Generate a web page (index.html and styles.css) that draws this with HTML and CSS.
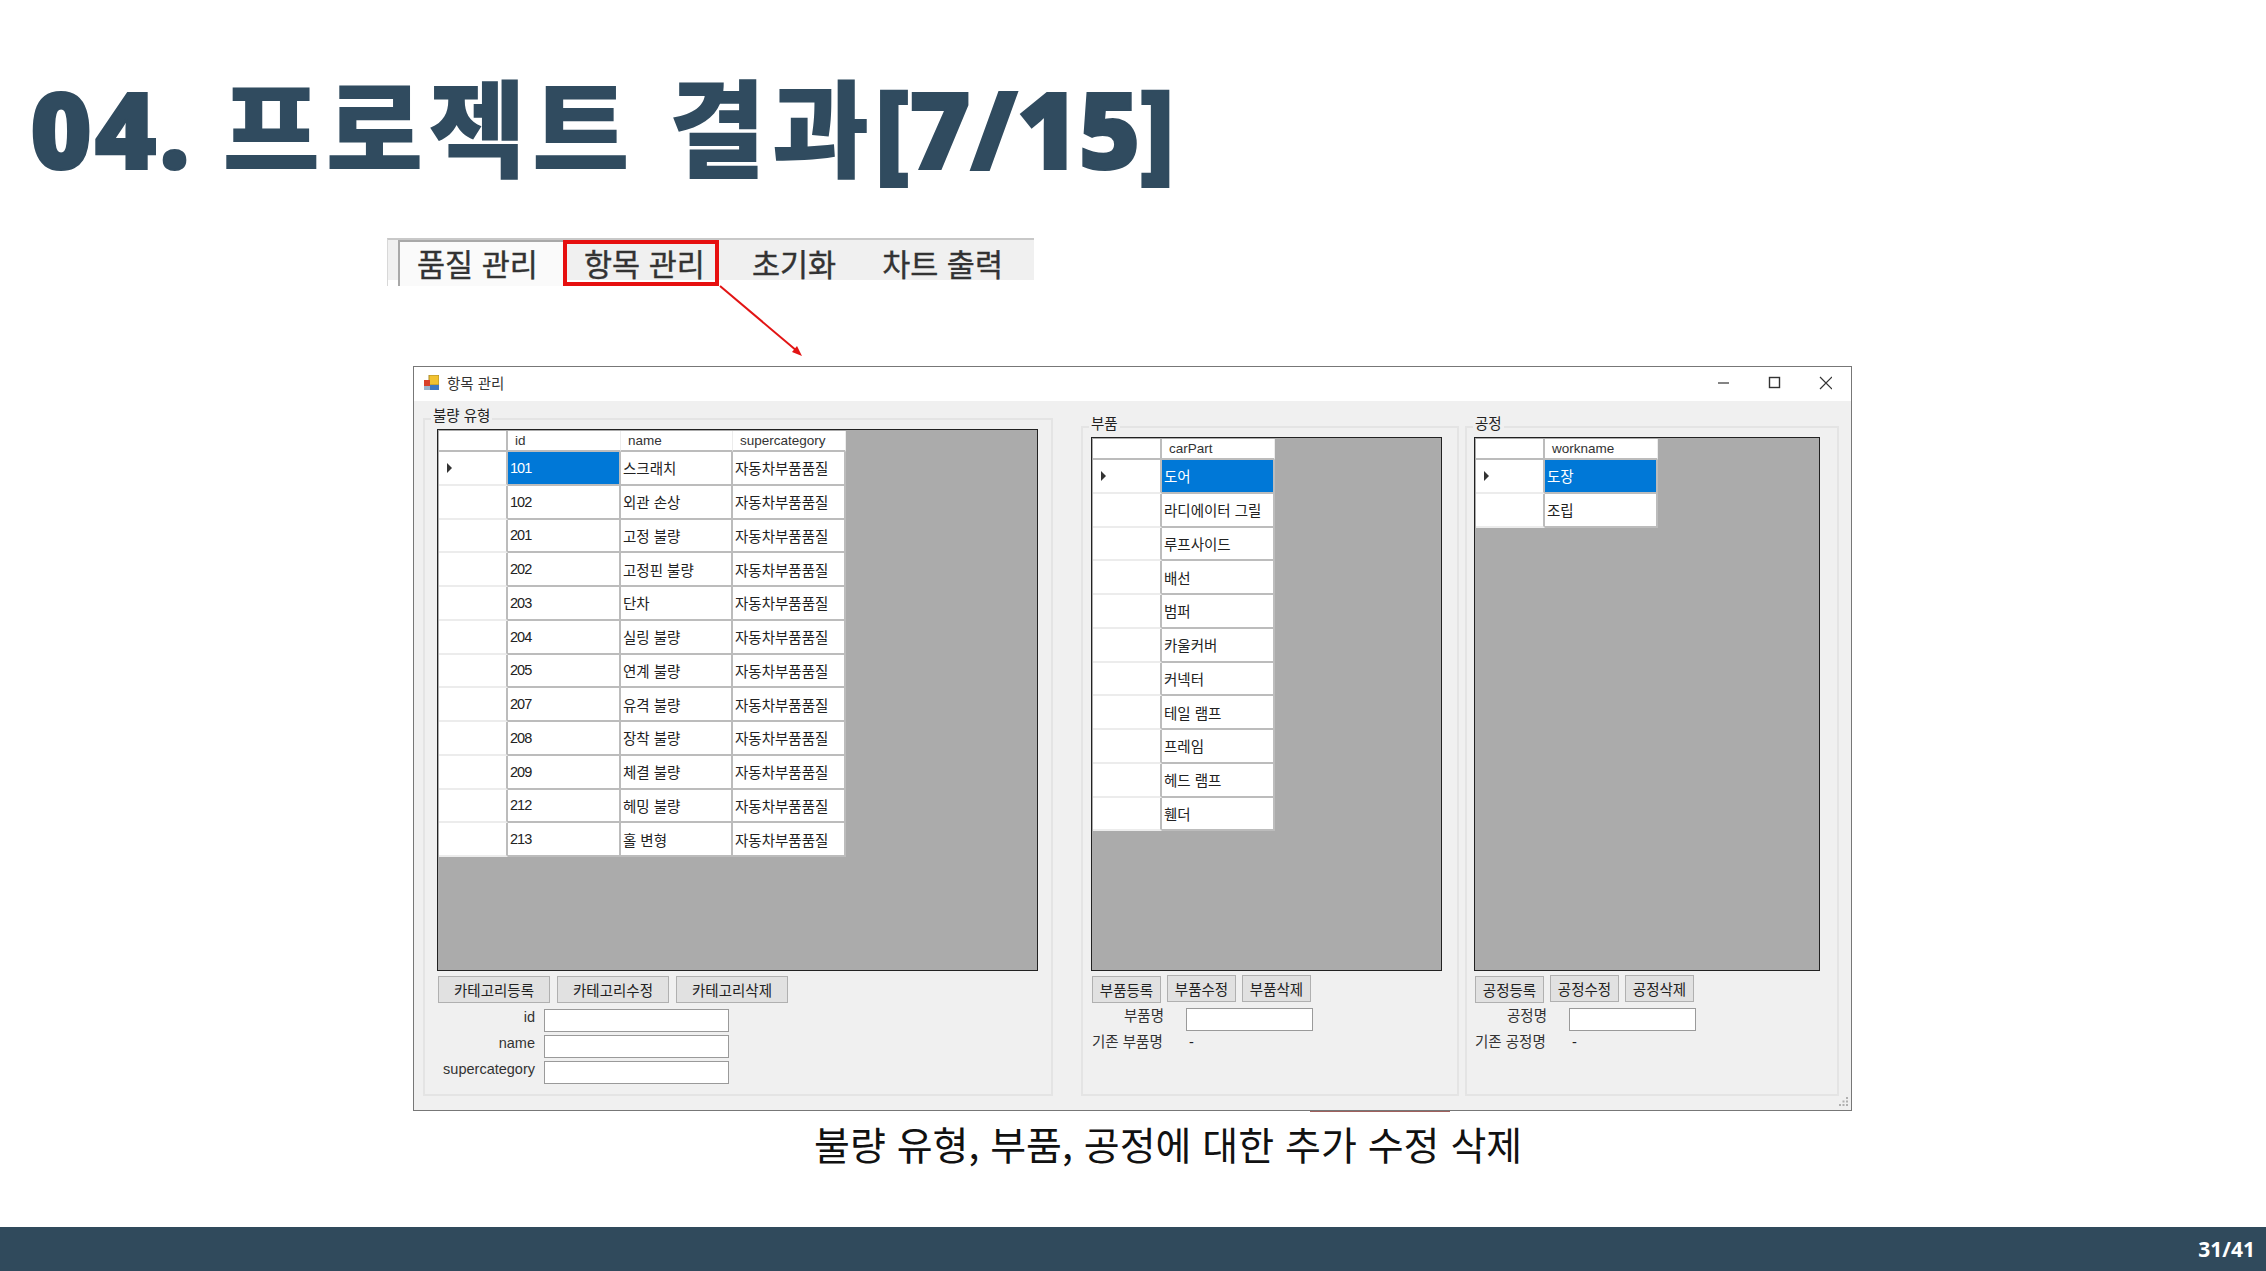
FILE: index.html
```html
<!DOCTYPE html>
<html lang="ko">
<head>
  <meta charset="UTF-8" />
  <title>04. 프로젝트 결과[7/15]</title>
  <link rel="stylesheet" href="styles.css">
</head>
<body>
<div class="slide">

  <h1 class="title"><span class="title-latin title-number">04. </span><span class="title-kr">프로젝트 결과</span><span class="title-latin">[7/15]</span></h1>

  <div class="tabs">
    <div class="tab tab-first">품질 관리</div>
    <div class="tab tab-marked">항목 관리</div>
    <div class="tab tab-third">초기화</div>
    <div class="tab tab-fourth">차트 출력</div>
    <svg class="arrow" width="90" height="76" viewBox="0 0 90 76">
      <line x1="1" y1="1" x2="78" y2="66" stroke="#e21414" stroke-width="2" />
      <polygon points="83,71 73,67 78,61" fill="#e21414" />
    </svg>
  </div>

  <div class="window">
    <div class="titlebar">
      <svg class="app-icon" width="15" height="15" viewBox="0 0 15 15">
        <rect x="5" y="0" width="10" height="10" fill="#f2c230" stroke="#a98a2a" stroke-width="1" />
        <rect x="0" y="5" width="6" height="6" fill="#d8402a" />
        <rect x="0" y="11" width="6" height="4" fill="#9db4cc" />
        <rect x="6" y="10" width="9" height="5" fill="#3f78c0" />
      </svg>
      <span class="window-title">항목 관리</span>
      <div class="window-controls">
        <svg width="114" height="14" viewBox="0 0 114 14">
          <line x1="0" y1="7" x2="11" y2="7" stroke="#333" stroke-width="1.2" />
          <rect x="51.5" y="1.5" width="10" height="10" fill="none" stroke="#333" stroke-width="1.4" />
          <path d="M102 1 L114 13 M114 1 L102 13" stroke="#333" stroke-width="1.2" fill="none" />
        </svg>
      </div>
    </div>

    <div class="window-body">

      <div class="group group-defect">
        <span class="legend">불량 유형</span>
        <div class="grid-box">
          <div class="data-grid cols-defect">
            <div class="corner"></div><div class="head">id</div><div class="head">name</div><div class="head">supercategory</div>
            <div class="rowhead"><i class="caret"></i></div><div class="cell num selected">101</div><div class="cell">스크래치</div><div class="cell">자동차부품품질</div>
            <div class="rowhead"></div><div class="cell num">102</div><div class="cell">외관 손상</div><div class="cell">자동차부품품질</div>
            <div class="rowhead"></div><div class="cell num">201</div><div class="cell">고정 불량</div><div class="cell">자동차부품품질</div>
            <div class="rowhead"></div><div class="cell num">202</div><div class="cell">고정핀 불량</div><div class="cell">자동차부품품질</div>
            <div class="rowhead"></div><div class="cell num">203</div><div class="cell">단차</div><div class="cell">자동차부품품질</div>
            <div class="rowhead"></div><div class="cell num">204</div><div class="cell">실링 불량</div><div class="cell">자동차부품품질</div>
            <div class="rowhead"></div><div class="cell num">205</div><div class="cell">연계 불량</div><div class="cell">자동차부품품질</div>
            <div class="rowhead"></div><div class="cell num">207</div><div class="cell">유격 불량</div><div class="cell">자동차부품품질</div>
            <div class="rowhead"></div><div class="cell num">208</div><div class="cell">장착 불량</div><div class="cell">자동차부품품질</div>
            <div class="rowhead"></div><div class="cell num">209</div><div class="cell">체결 불량</div><div class="cell">자동차부품품질</div>
            <div class="rowhead"></div><div class="cell num">212</div><div class="cell">헤밍 불량</div><div class="cell">자동차부품품질</div>
            <div class="rowhead"></div><div class="cell num">213</div><div class="cell">홀 변형</div><div class="cell">자동차부품품질</div>
          </div>
        </div>
        <div class="group-foot">
          <div class="buttons buttons-wide">
            <button class="btn">카테고리등록</button>
            <button class="btn">카테고리수정</button>
            <button class="btn">카테고리삭제</button>
          </div>
          <div class="form form-defect">
            <label class="label">id</label><div class="input"></div>
            <label class="label">name</label><div class="input"></div>
            <label class="label">supercategory</label><div class="input"></div>
          </div>
        </div>
      </div>

      <div class="group group-part">
        <span class="legend">부품</span>
        <div class="grid-box">
          <div class="data-grid cols-single">
            <div class="corner"></div><div class="head">carPart</div>
            <div class="rowhead"><i class="caret"></i></div><div class="cell selected">도어</div>
            <div class="rowhead"></div><div class="cell">라디에이터 그릴</div>
            <div class="rowhead"></div><div class="cell">루프사이드</div>
            <div class="rowhead"></div><div class="cell">배선</div>
            <div class="rowhead"></div><div class="cell">범퍼</div>
            <div class="rowhead"></div><div class="cell">카울커버</div>
            <div class="rowhead"></div><div class="cell">커넥터</div>
            <div class="rowhead"></div><div class="cell">테일 램프</div>
            <div class="rowhead"></div><div class="cell">프레임</div>
            <div class="rowhead"></div><div class="cell">헤드 램프</div>
            <div class="rowhead"></div><div class="cell">휀더</div>
          </div>
        </div>
        <div class="group-foot">
          <div class="buttons">
            <button class="btn btn-low">부품등록</button>
            <button class="btn">부품수정</button>
            <button class="btn">부품삭제</button>
          </div>
          <div class="form form-small">
            <label class="label">부품명</label><div class="input"></div>
            <label class="label label-left">기존 부품명</label><span class="value">-</span>
          </div>
        </div>
      </div>

      <div class="group group-work">
        <span class="legend">공정</span>
        <div class="grid-box">
          <div class="data-grid cols-single">
            <div class="corner"></div><div class="head">workname</div>
            <div class="rowhead"><i class="caret"></i></div><div class="cell selected">도장</div>
            <div class="rowhead"></div><div class="cell">조립</div>
          </div>
        </div>
        <div class="group-foot">
          <div class="buttons">
            <button class="btn btn-low">공정등록</button>
            <button class="btn">공정수정</button>
            <button class="btn">공정삭제</button>
          </div>
          <div class="form form-small">
            <label class="label">공정명</label><div class="input"></div>
            <label class="label label-left">기존 공정명</label><span class="value">-</span>
          </div>
        </div>
      </div>

    </div>

    <svg class="grip" width="10" height="10" viewBox="0 0 10 10">
      <rect x="7" y="0" width="2" height="2" fill="#b0b0b0" />
      <rect x="3.5" y="3.5" width="2" height="2" fill="#b0b0b0" />
      <rect x="7" y="3.5" width="2" height="2" fill="#b0b0b0" />
      <rect x="0" y="7" width="2" height="2" fill="#b0b0b0" />
      <rect x="3.5" y="7" width="2" height="2" fill="#b0b0b0" />
      <rect x="7" y="7" width="2" height="2" fill="#b0b0b0" />
    </svg>
    <div class="sliver"></div>
  </div>

  <p class="caption">불량 유형, 부품, 공정에 대한 추가 수정 삭제</p>

  <div class="footer">
    <span class="page-no">31/41</span>
  </div>

</div>
</body>
</html>
```

FILE: styles.css
```css
* {
  box-sizing: border-box;
}
html, body {
  margin: 0;
  padding: 0;
  background: #fff;
}
body {
  font-family: "Liberation Sans", "Noto Sans CJK KR", sans-serif;
  font-size: 14.5px;
  color: #222;
}
.slide {
  display: flex;
  flex-direction: column;
  height: 1271px;
  overflow: hidden;
}

/* title */
.title {
  height: 238px;
  margin: 0;
  padding: 56px 0 0 30px;
  font-family: "Open Sans", "Noto Sans CJK KR", sans-serif;
  font-size: 106px;
  font-weight: 800;
  line-height: 144px;
  white-space: nowrap;
  color: #304b5f;
}
.title-latin {
  letter-spacing: -0.5px;
  -webkit-text-stroke: 2px #304b5f;
}
.title-number {
  letter-spacing: 2.5px;
}
.title-kr {
  letter-spacing: 5.7px;
}

/* tab strip */
.tabs {
  position: relative;
  display: flex;
  flex: none;
  width: 647px;
  height: 48px;
  margin-left: 387px;
  border-top: 2px solid #c8c8c8;
  border-left: 1px solid #d8d8d8;
  background: linear-gradient(#f0f0f0 40px, #fff 40px);
  font-family: "Noto Sans CJK KR", sans-serif;
  font-size: 30.5px;
  color: #333;
  -webkit-text-stroke: 0.4px #333;
}
.tab {
  flex: none;
  line-height: 46px;
  white-space: nowrap;
}
.tab-first {
  width: 165px;
  height: 46px;
  margin-left: 10px;
  padding-left: 17px;
  background: #fafafa;
  border-left: 2px solid #a8a8a8;
  border-top: 2px solid #a8a8a8;
  line-height: 42px;
}
.tab-marked {
  width: 156px;
  height: 46px;
  padding-left: 17px;
  border: 4px solid #e60f0f;
  line-height: 38px;
}
.tab-third {
  margin-left: 33px;
}
.tab-fourth {
  margin-left: 46px;
}
.arrow {
  position: absolute;
  left: 331px;
  top: 45px;
}

/* window */
.window {
  position: relative;
  display: flex;
  flex-direction: column;
  flex: none;
  width: 1439px;
  height: 745px;
  margin: 80px 0 0 413px;
  border: 1px solid #777;
  background: #f0f0f0;
}
.titlebar {
  display: flex;
  align-items: center;
  flex: none;
  height: 34px;
  padding: 0 0 3px 10px;
  background: #fff;
}
.window-title {
  margin-left: 8px;
  font-size: 14.5px;
  color: #333;
}
.window-controls {
  display: flex;
  margin-left: auto;
  padding-right: 19px;
}
.window-body {
  display: flex;
  align-items: stretch;
  flex: 1;
  min-height: 0;
  padding: 0 0 14px 9px;
}
.grip {
  position: absolute;
  right: 2px;
  bottom: 3px;
}
.sliver {
  position: absolute;
  left: 896px;
  bottom: -2px;
  width: 140px;
  height: 1px;
  background: #a0605c;
}

/* group boxes */
.group {
  position: relative;
  display: flex;
  flex-direction: column;
  flex: none;
  border: 2px solid #e4e4e4;
}
.group-defect {
  width: 630px;
  margin-top: 17px;
  padding: 9px 13px 0 12px;
}
.group-part {
  width: 378px;
  margin: 25px 0 0 28px;
  padding: 9px 15px 0 8px;
}
.group-work {
  width: 374px;
  margin: 25px 0 0 6px;
  padding: 9px 17px 0 7px;
}
.legend {
  position: absolute;
  top: -14px;
  left: 6px;
  padding: 0 2px;
  background: #f0f0f0;
  line-height: 20px;
}
.grid-box {
  flex: 1;
  min-height: 0;
  border: 1px solid #222;
  background: #ababab;
  padding: 1px;
}

/* data grid */
.data-grid {
  display: grid;
  grid-auto-rows: 33.75px;
  grid-template-rows: 21px;
  width: max-content;
}
.cols-defect {
  grid-template-columns: 69px 113px 112px 113px;
}
.cols-single {
  grid-template-columns: 69px 113px;
}
.corner, .rowhead {
  background: #fff;
  border-right: 2px solid #bcbcbc;
  border-bottom: 2px solid #ececec;
}
.corner {
  border-bottom-color: #bcbcbc;
}
.head, .cell {
  display: flex;
  align-items: center;
  background: #fff;
  white-space: nowrap;
}
.head {
  padding-left: 7px;
  border-right: 1px solid #ececec;
  border-bottom: 2px solid #bcbcbc;
  font-size: 13.5px;
  color: #333;
}
.cell {
  padding-left: 2px;
  border-right: 2px solid #bcbcbc;
  border-bottom: 2px solid #bcbcbc;
}
.num {
  letter-spacing: -1px;
}
.selected {
  background: #0078d7;
  color: #fff;
}
.rowhead {
  display: flex;
  align-items: center;
  padding-left: 8px;
}
.caret {
  width: 0;
  height: 0;
  border-left: 5px solid #333;
  border-top: 5px solid transparent;
  border-bottom: 5px solid transparent;
}

/* buttons and form under each grid */
.group-foot {
  flex: none;
  height: 123px;
}
.buttons {
  display: flex;
  align-items: flex-start;
  gap: 6px;
  margin: 4px 0 0 1px;
}
.buttons-wide {
  gap: 7px;
  margin-top: 5px;
}
.btn {
  width: 69px;
  height: 27px;
  padding: 0;
  border: 1px solid #b0b0b0;
  background: #e1e1e1;
  font: inherit;
  color: #222;
  white-space: nowrap;
}
.buttons-wide .btn {
  width: 112px;
}
.btn-low {
  margin-top: 1px;
}
.form {
  display: grid;
  row-gap: 3px;
  margin-left: 1px;
}
.form-defect {
  grid-template-columns: 97px 185px;
  column-gap: 9px;
  margin-top: 6px;
}
.form-small {
  grid-template-columns: 72px 127px;
  column-gap: 22px;
  margin-top: 5px;
}
.label {
  text-align: right;
  line-height: 17px;
  color: #333;
  white-space: nowrap;
}
.label-left {
  text-align: left;
}
.input {
  height: 23px;
  border: 1px solid #9a9a9a;
  background: #fff;
}
.value {
  padding-left: 3px;
  line-height: 17px;
}

/* bottom of the slide */
.caption {
  flex: none;
  margin: 9px 0 0 814px;
  font-family: "Noto Sans CJK KR", sans-serif;
  font-size: 39px;
  line-height: 46px;
  color: #111;
  white-space: nowrap;
}
.footer {
  display: flex;
  align-items: center;
  justify-content: flex-end;
  flex: none;
  height: 44px;
  margin-top: auto;
  padding-right: 11px;
  background: #304a5c;
}
.page-no {
  font-family: "Noto Sans", sans-serif;
  font-size: 21px;
  font-weight: 700;
  color: #fff;
}
```
